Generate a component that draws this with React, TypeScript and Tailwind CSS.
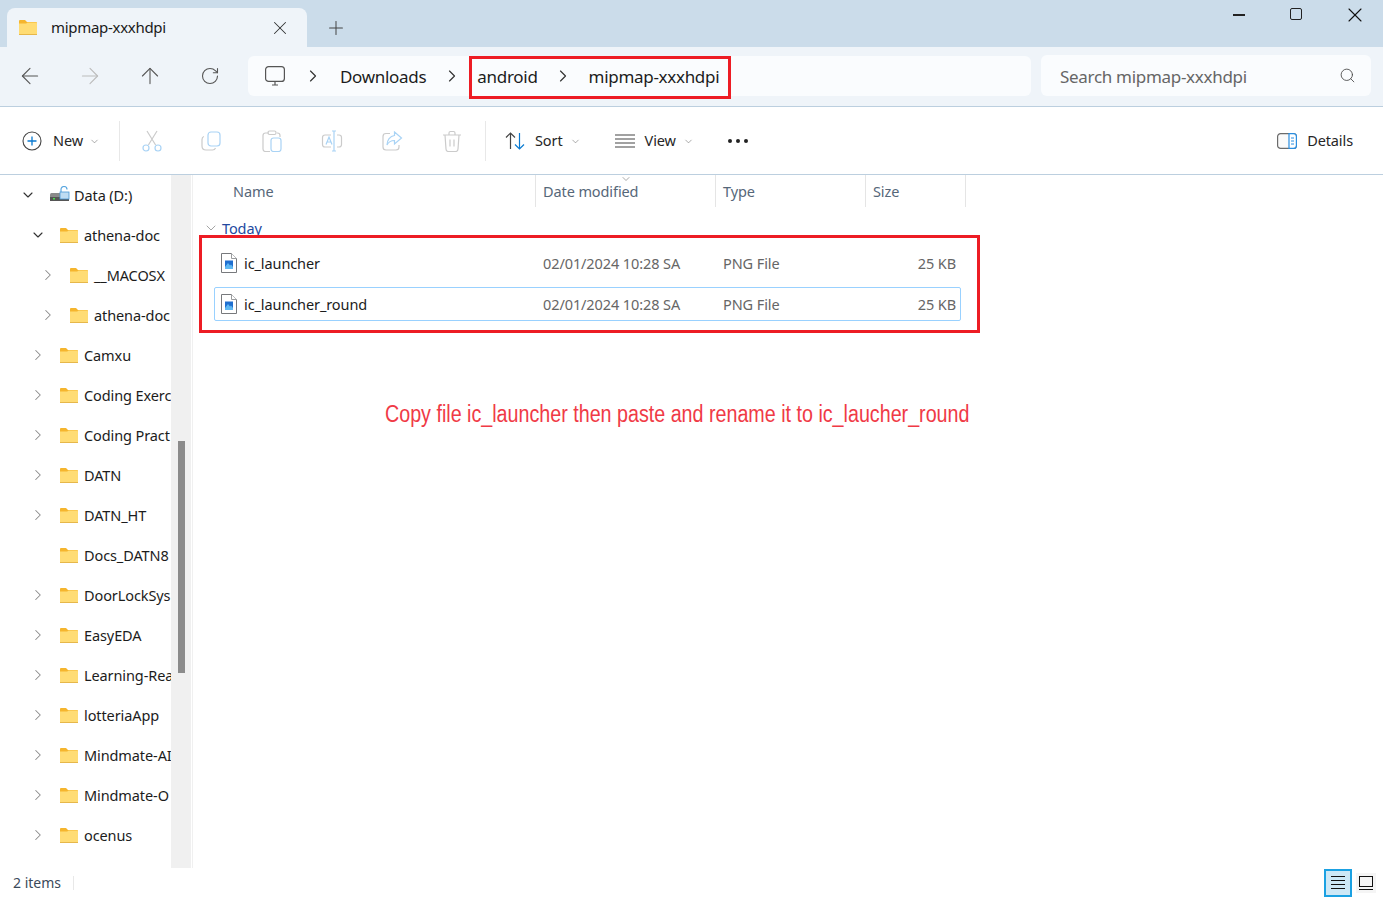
import { ArrowLeft, ArrowRight, ArrowUp, ChevronDown, ChevronRight, Plus, RotateCw, Search, X } from "lucide-react";

const tree = [
  { name: "athena-doc", level: 1, open: true },
  { name: "__MACOSX", level: 2 },
  { name: "athena-doc", level: 2 },
  { name: "Camxu", level: 1 },
  { name: "Coding Exerc", level: 1 },
  { name: "Coding Pract", level: 1 },
  { name: "DATN", level: 1 },
  { name: "DATN_HT", level: 1 },
  { name: "Docs_DATN8", level: 1, leaf: true },
  { name: "DoorLockSys", level: 1 },
  { name: "EasyEDA", level: 1 },
  { name: "Learning-Rea", level: 1 },
  { name: "lotteriaApp", level: 1 },
  { name: "Mindmate-AI", level: 1 },
  { name: "Mindmate-O", level: 1 },
  { name: "ocenus", level: 1 },
];

const files = [
  { name: "ic_launcher", selected: false },
  { name: "ic_launcher_round", selected: true },
];

function FolderIcon({ className = "" }: { className?: string }) {
  return (
    <svg width="18" height="15" viewBox="0 0 18 15" className={className}>
      <path d="M0 1.2C0 .5.5 0 1.2 0h4.3c.4 0 .7.1 1 .4L8 2h8.8c.7 0 1.2.5 1.2 1.2V6H0z" fill="#f5b52d" />
      <path d="M0 3.6h7.2L8.6 2.6h8.2c.7 0 1.2.5 1.2 1.2v10c0 .7-.5 1.2-1.2 1.2H1.2C.5 15 0 14.5 0 13.800z" fill="#ffdc74" />
      <rect y="14" width="18" height="1" fill="#e6b74a" />
    </svg>
  );
}

function FileIcon() {
  return (
    <svg width="16" height="20" viewBox="0 0 16 20">
      <path d="M.5.5h10l5 5v14H.5z" fill="#fff" stroke="#77797c" />
      <path d="M10.500.5v5h5" fill="#fff" stroke="#9a9c9e" />
      <rect x="4" y="7.500" width="8" height="8.500" fill="#1f6fd0" />
      <path d="M4 16v-2l3-4 2 2.500 1-1 2 2.500v2z" fill="#5fb8f2" />
    </svg>
  );
}

function Caret() {
  return <ChevronDown size={11} strokeWidth={1.2} className="text-[#666]" />;
}

function Crumb() {
  return <ChevronRight size={20} strokeWidth={1.4} className="text-[#333]" />;
}

function ToolIcon({ children }: { children: React.ReactNode }) {
  return (
    <div className="flex w-[60px] items-center justify-center">
      <svg width="22" height="22" viewBox="0 0 22 22" fill="none" strokeWidth="1.2">
        {children}
      </svg>
    </div>
  );
}

const GREY = "#cbcbcb";
const BLUE = "#a9d3f5";

function Toolbar() {
  return (
    <div className="flex h-[68px] shrink-0 items-center border-b border-[#bccfdf] bg-white pl-[22px] pt-[1px] text-[14.5px] tracking-[-0.1px] text-[#262626]">
      <div className="flex w-[79px] items-center">
        <svg width="20" height="20" viewBox="0 0 20 20" fill="none">
          <circle cx="10" cy="10" r="9" stroke="#444" strokeWidth="1.1" />
          <path d="M10 5.5v9M5.5 10h9" stroke="#0a7ad1" strokeWidth="1.3" />
        </svg>
        <span className="ml-[11px] mr-[6px]">New</span>
        <Caret />
      </div>
      <div className="mx-[18px] h-10 w-px shrink-0 bg-[#e8e8e8]" />
      <div className="-ml-[16px] flex">
        <ToolIcon>
          <path d="M6 1l8.6 14M16 1L7.4 15" stroke={GREY} />
          <circle cx="5" cy="18" r="3" stroke={BLUE} />
          <circle cx="17" cy="18" r="3" stroke={BLUE} />
        </ToolIcon>
        <ToolIcon>
          <path d="M3 6.5C1.5 7 1 8 1 9.5V16c0 2.5 1.5 4 4 4h6.5c1.500 0 2.500-.5 3-2" stroke={GREY} />
          <rect x="7" y="2" width="12" height="14" rx="3" stroke={BLUE} />
        </ToolIcon>
        <ToolIcon>
          <path d="M8 3H4.500C3 3 2 4 2 5.500V19c0 1.500 1 2.500 2.500 2.500H9M16 3h.5C18 3 19 4 19 5.500V7" stroke={GREY} />
          <rect x="7" y="1" width="8" height="3.500" rx="1.500" stroke={GREY} />
          <rect x="10" y="8" width="10" height="13.500" rx="2.500" stroke={BLUE} />
        </ToolIcon>
        <ToolIcon>
          <path d="M10 5H4C2.500 5 1.500 6 1.500 7.500v7C1.500 16 2.500 17 4 17h6M16 5h2c1.500 0 2.500 1 2.500 2.500v7c0 1.500-1 2.500-2.500 2.500h-2" stroke={GREY} />
          <path d="M11 1h4M13 1v20M11 21h4M5 14.500L8 7l3 7.500M6 12h4" stroke={BLUE} />
        </ToolIcon>
        <ToolIcon>
          <path d="M9 3.500H5C3 3.500 2 4.500 2 6.500V17c0 2 1 3 3 3h10c2 0 3-1 3-3v-2" stroke={GREY} />
          <path d="M13.500 2l7 6-7 6v-3.500C10 10.500 7.500 12 6 15c0-5 3-9 7.500-9.500z" stroke={BLUE} />
        </ToolIcon>
        <ToolIcon>
          <path d="M2 5h18M8 5V3c0-1 .5-1.500 1.500-1.500h3c1 0 1.500.5 1.500 1.500v2M4 5l1 14c0 1.500 1 2.500 2.500 2.500h7c1.500 0 2.500-1 2.500-2.500l1-14M9 9.500v7M13 9.500v7" stroke={GREY} />
        </ToolIcon>
      </div>
      <div className="ml-[3px] h-10 w-px shrink-0 bg-[#e8e8e8]" />
      <div className="ml-[19px] flex items-center">
        <svg width="20" height="18" viewBox="0 0 20 18" fill="none" strokeWidth="1.2">
          <path d="M5.500 17V1M1 5.500L5.500 1 10 5.500" stroke="#444" />
          <path d="M14.500 1v16M10 12.500l4.500 4.500 4.500-4.500" stroke="#0a7ad1" />
        </svg>
        <span className="ml-[10px] mr-[7px]">Sort</span>
        <Caret />
      </div>
      <div className="ml-[34px] flex items-center">
        <svg width="20" height="14" viewBox="0 0 20 14" stroke="#444" strokeWidth="1.100">
          <path d="M0 1h20M0 5h20M0 9h20M0 13h20" />
        </svg>
        <span className="ml-[10px] mr-[7px]">View</span>
        <Caret />
      </div>
      <div className="ml-[34px] flex gap-[4px]">
        <span className="size-[4px] rounded-full bg-[#222]" />
        <span className="size-[4px] rounded-full bg-[#222]" />
        <span className="size-[4px] rounded-full bg-[#222]" />
      </div>
      <div className="ml-auto flex items-center pr-[30px]">
        <svg width="20" height="16" viewBox="0 0 20 16" fill="none">
          <rect x=".6" y=".6" width="18.800" height="14.800" rx="3" fill="#fafafa" stroke="#6b6b6b" strokeWidth="1.200" />
          <path d="M12 .6h4.400a3 3 0 0 1 3 3v8.800a3 3 0 0 1-3 3H12z" fill="#fff" stroke="#2a8ee0" strokeWidth="1.200" />
          <path d="M14 5h3M14 8h3M14 11h3" stroke="#2a8ee0" />
        </svg>
        <span className="ml-[10px]">Details</span>
      </div>
    </div>
  );
}

function Sidebar() {
  return (
    <div className="flex w-[193px] shrink-0 border-r border-[#f0f0f0]">
      <div className="w-[171px] shrink-0 overflow-hidden text-[14.5px] tracking-[-0.1px] text-[#1c1c1c]">
        <div className="flex h-10 items-center whitespace-nowrap pl-[20px]">
          <ChevronDown size={16} strokeWidth={1.700} className="text-[#333]" />
          <svg width="20" height="18" viewBox="0 0 20 18" className="ml-[14px]">
            <rect x="0" y="7" width="19" height="8" rx="1.500" fill="#8a8a8a" />
            <rect x="0" y="11" width="19" height="4" fill="#555" />
            <rect x="3" y="12" width="2" height="1.500" fill="#4be04b" />
            <path d="M11 7V3.500C11 1.500 12.500.5 14 .5s3 1 3 3" fill="none" stroke="#5aa7e0" strokeWidth="1.200" />
            <rect x="10" y="6" width="9" height="7" fill="#bfdcf2" stroke="#4a97d4" strokeWidth=".8" />
          </svg>
          <span className="ml-[4px] mt-[2px]">Data (D:)</span>
        </div>
        {tree.map((item, i) => (
          <div
            key={i}
            className={`flex h-10 items-center whitespace-nowrap ${item.level === 2 ? "pl-[39px]" : "pl-[29px]"}`}
          >
            <span className="flex w-[18px] shrink-0 justify-center">
              {item.open ? (
                <ChevronDown size={16} strokeWidth={1.700} className="text-[#333]" />
              ) : item.leaf ? null : (
                <ChevronRight size={18} strokeWidth={1.400} className="text-[#8a8a8a]" />
              )}
            </span>
            <FolderIcon className="ml-[13px] shrink-0" />
            <span className="ml-[6px] mt-[2px]">{item.name}</span>
          </div>
        ))}
      </div>
      <div className="flex w-[20px] shrink-0 justify-center bg-[#f0f0f0] pt-[266px]">
        <div className="h-[232px] w-[7px] bg-[#8b8b8b]" />
      </div>
    </div>
  );
}

function FileList() {
  return (
    <div className="relative min-w-0 flex-1 bg-white tracking-[-0.1px]">
      <div className="flex h-[32px] text-[14.500px] text-[#566779]">
        <div className="flex w-[343px] items-center border-r border-[#e5e5e5] pl-[40px] pt-[2px]">Name</div>
        <div className="relative flex w-[180px] items-center border-r border-[#e5e5e5] pl-[7px] pt-[2px]">
          <ChevronDown size={12} strokeWidth={1} className="absolute left-[84px] -top-[2px] text-[#555]" />
          Date modified
        </div>
        <div className="flex w-[150px] items-center border-r border-[#e5e5e5] pl-[7px] pt-[2px]">Type</div>
        <div className="flex w-[100px] items-center border-r border-[#e5e5e5] pl-[7px] pt-[2px]">Size</div>
      </div>
      <div className="flex h-[39px] items-start pl-[10px] pt-[11px] text-[14.500px] leading-[20px] text-[#24499f]">
        <ChevronDown size={16} strokeWidth={1} className="mt-[2px] text-[#777]" />
        <span className="ml-[3px]">Today</span>
      </div>
      <div className="flex flex-col gap-[7px] pl-[21px]">
        {files.map(f => (
          <div
            key={f.name}
            className={`flex h-[34px] w-[747px] items-center rounded-[2px] border text-[14.500px] ${f.selected ? "border-[#99d1ff]" : "border-transparent"}`}
          >
            <div className="flex w-[328px] items-center pl-[6px] text-[#1c1c1c]">
              <FileIcon />
              <span className="ml-[7px] mt-[2px]">{f.name}</span>
            </div>
            <div className="mt-[2px] w-[180px] text-[#666]">02/01/2024 10:28 SA</div>
            <div className="mt-[2px] w-[100px] text-[#666]">PNG File</div>
            <div className="mt-[2px] flex-1 pr-[4px] text-right text-[#666]">25 KB</div>
          </div>
        ))}
      </div>
      <div className="absolute left-[6px] top-[60px] h-[98px] w-[781px] border-[3px] border-[#ed1c24]" />
      <div className="absolute left-[192px] top-[225px] origin-left scale-x-[0.856] whitespace-nowrap font-['Liberation_Sans',sans-serif] text-[23px] leading-[28px] tracking-normal text-[#f03a46]">
        Copy file ic_launcher then paste and rename it to ic_laucher_round
      </div>
    </div>
  );
}

export default function App() {
  return (
    <div className="flex h-[897px] w-[1383px] flex-col overflow-hidden bg-white font-['Noto_Sans',sans-serif]">
      <div className="flex h-[47px] shrink-0 items-end bg-[#cbdcea] pl-[7px]">
        <div className="flex h-[39px] w-[300px] items-center rounded-t-[8px] bg-[#eff4f9] pl-[12px] pr-[16px]">
          <FolderIcon />
          <span className="ml-[14px] text-[15px] tracking-[-0.3px] text-[#1a1a1a]">mipmap-xxxhdpi</span>
          <X size={22} strokeWidth={1.100} className="ml-auto text-[#333]" />
        </div>
        <Plus size={22} strokeWidth={1.100} className="mb-[8px] ml-[18px] text-[#444]" />
        <div className="ml-auto flex h-[47px] items-start pr-[16px] pt-[8px] text-[#111]">
          <div className="mt-[6px] h-[1.500px] w-[12px] bg-[#222]" />
          <div className="ml-[45px] size-[12px] rounded-[2px] border-[1.500px] border-[#222]" />
          <X size={24} strokeWidth={1.100} className="-mt-[5px] ml-[41px]" />
        </div>
      </div>

      <div className="flex h-[60px] shrink-0 items-center border-b border-[#bccfdf] bg-[#eff4f9] pb-[2px]">
        <div className="flex w-[248px] shrink-0 items-center text-[#555]">
          <div className="flex w-[60px] justify-center"><ArrowLeft size={26} strokeWidth={1} /></div>
          <div className="flex w-[60px] justify-center text-[#bbb]"><ArrowRight size={26} strokeWidth={1} /></div>
          <div className="flex w-[60px] justify-center"><ArrowUp size={26} strokeWidth={1} /></div>
          <div className="flex w-[60px] justify-center"><RotateCw size={20} strokeWidth={1.300} /></div>
        </div>
        <div className="relative flex h-10 w-[783px] shrink-0 items-center rounded-[6px] bg-[#fafcfe] pl-[17px] text-[17px] tracking-[-0.3px] text-[#1c1c1c]">
          <svg width="20" height="20" viewBox="0 0 20 20" fill="none" stroke="#555" strokeWidth="1.200">
            <rect x=".6" y=".6" width="18.800" height="14.800" rx="3" />
            <path d="M7 19h6M10 16v3" />
          </svg>
          <span className="ml-[18px]"><Crumb /></span>
          <span className="ml-[17px] mt-[2px]">Downloads</span>
          <span className="ml-[16px]"><Crumb /></span>
          <span className="ml-[15px] mt-[2px]">android</span>
          <span className="ml-[15px]"><Crumb /></span>
          <span className="ml-[16px] mt-[2px]">mipmap-xxxhdpi</span>
          <div className="absolute left-[221px] top-0 h-[43px] w-[262px] border-[3px] border-[#ed1c24]" />
        </div>
        <div className="ml-[10px] flex h-[41px] w-[330px] shrink-0 items-center justify-between rounded-[6px] bg-[#fafcfe] pl-[19px] pr-[15px] text-[17px] tracking-[-0.3px] text-[#666]">
          <span className="mt-[2px]">Search mipmap-xxxhdpi</span>
          <Search size={17} strokeWidth={1.200} className="text-[#444]" />
        </div>
      </div>

      <Toolbar />

      <div className="flex min-h-0 flex-1">
        <Sidebar />
        <FileList />
      </div>

      <div className="flex h-[29px] shrink-0 items-center bg-white pl-[13px] text-[14px] text-[#3b4a5a]">
        <span>2 items</span>
        <div className="ml-[12px] h-[14px] w-px bg-[#e8e8e8]" />
        <div className="ml-auto flex items-center pr-[7px]">
          <div className="flex size-[28px] items-center justify-center border-2 border-[#1ba1e2] bg-[#cde8f6]">
            <svg width="14" height="13" viewBox="0 0 14 13" stroke="#111">
              <path d="M0 .5h14M0 4.500h14M0 8.500h14M0 12.500h14" />
            </svg>
          </div>
          <div className="ml-[4px] flex size-[20px] items-center justify-center bg-[#f5f5f5]">
            <svg width="14" height="14" viewBox="0 0 14 14" fill="none" stroke="#111">
              <rect x=".5" y=".5" width="13" height="10" />
              <path d="M0 13.500h14" />
            </svg>
          </div>
        </div>
      </div>
    </div>
  );
}
